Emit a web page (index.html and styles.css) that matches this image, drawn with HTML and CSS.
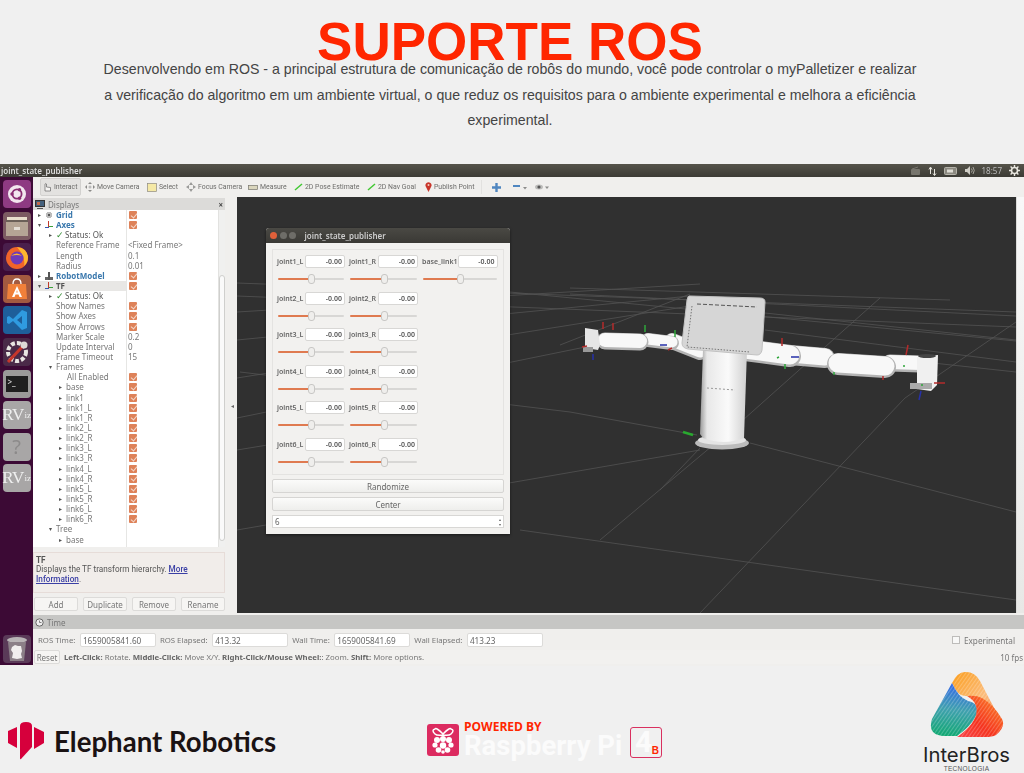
FILE: index.html
```html
<!DOCTYPE html>
<html lang="pt-BR">

<head>
    <meta charset="UTF-8">
    <meta name="viewport" content="width=device-width, initial-scale=1.0">
    <title>Suporte ROS</title>
    <link rel="stylesheet" href="styles.css">
</head>

<body>
    <header class="intro">
        <h1>SUPORTE ROS</h1>
        <p>Desenvolvendo em ROS - a principal estrutura de comunicação de robôs do mundo, você pode controlar o myPalletizer e realizar<br>
        a verificação do algoritmo em um ambiente virtual, o que reduz os requisitos para o ambiente experimental e melhora a eficiência<br>
        experimental.</p>
    </header>

    <section class="desktop">
        <div class="topbar">
            <span class="topbar-title">joint_state_publisher</span>
            <div class="tray">
                <svg width="11" height="10" viewBox="0 0 11 10"><rect x="1" y="3" width="9" height="6" rx="1" fill="#77756d"/><path d="M2 3 8 1" stroke="#77756d"/></svg>
                <svg width="9" height="10" viewBox="0 0 9 10"><path d="M2.500 8V2M1 3.500 2.500 1 4 3.500M6.500 3v6M5 7.500 6.500 9.500 8 7.500" stroke="#e8e6df" fill="none"/></svg>
                <svg width="14" height="8" viewBox="0 0 14 8"><rect x=".5" y=".5" width="12" height="7" rx="1" fill="#8b8980" stroke="#b5b3aa"/><rect x="3" y="2.500" width="6" height="3" fill="#dedcd4"/></svg>
                <svg width="10" height="9" viewBox="0 0 10 9"><path d="M0 3h2l3-3v9L2 6H0z" fill="#cfcdc5"/><path d="M6.500 2.500q1.500 2 0 4M8 1q2.500 3.500 0 7" stroke="#a9a79f" fill="none"/></svg>
                <span class="clock">18:57</span>
                <svg width="11" height="11" viewBox="0 0 11 11"><circle cx="5.500" cy="5.500" r="3" fill="none" stroke="#e8e6df" stroke-width="1.600"/><path d="M5.500 0v2M5.500 9v2M0 5.500h2M9 5.500h2M1.600 1.600 3 3M8 8l1.400 1.400M9.400 1.600 8 3M3 8 1.600 9.400" stroke="#e8e6df" stroke-width="1.400"/></svg>
            </div>
        </div>

        <div class="workspace">
            <nav class="launcher">
                <div class="tile tile-dash">
                    <svg width="20" height="20" viewBox="0 0 20 20"><circle cx="10" cy="10" r="9" fill="#f3e6ef"/><circle cx="10" cy="10" r="4.600" fill="none" stroke="#8a2d72" stroke-width="1.800"/><circle cx="5" cy="10" r="1.700" fill="#8a2d72"/><circle cx="12.500" cy="5.700" r="1.700" fill="#8a2d72"/><circle cx="12.500" cy="14.300" r="1.700" fill="#8a2d72"/></svg>
                </div>
                <div class="tile tile-files">
                    <svg width="24" height="24" viewBox="0 0 24 24"><rect x="2" y="3" width="20" height="5" fill="#e9dfcd"/><rect x="1" y="8" width="22" height="14" fill="#b5a595"/><rect x="1" y="6" width="22" height="2" fill="#6b6058"/><rect x="9" y="13" width="6" height="3" fill="#e4ded5"/></svg>
                </div>
                <div class="tile tile-firefox">
                    <svg width="26" height="26" viewBox="0 0 26 26"><circle cx="13" cy="14" r="11" fill="#f0642a"/><path d="M13 3q10 1 11 10 0 6-4 9 2-9-7-19z" fill="#fdb52f"/><circle cx="13" cy="14" r="6.500" fill="#6e3bb8"/><path d="M7 12q6-5 11 0-5-2-11 0z" fill="#fdb52f"/></svg>
                </div>
                <div class="tile tile-store">
                    <svg width="24" height="24" viewBox="0 0 24 24"><path d="M3 7h18l1 15H2z" fill="#f0803a"/><path d="M8 7q0-5 4-5t4 5" fill="none" stroke="#fff" stroke-width="1.300"/><path d="M12 9 7 20h2.500l1-2.500h3l1 2.500H17zM11.300 15.500 12 13l.7 2.500z" fill="#fff"/></svg>
                </div>
                <div class="tile tile-code">
                    <svg width="24" height="24" viewBox="0 0 24 24"><path d="M17 2 8 11 4 8 2 9v6l2 1 4-3 9 9 5-2V4zm0 6v8l-5-4z" fill="#2f9be0"/></svg>
                </div>
                <div class="tile tile-settings">
                    <svg width="26" height="26" viewBox="0 0 26 26"><circle cx="13" cy="13" r="9" fill="none" stroke="#e8e6e2" stroke-width="4" stroke-dasharray="4 2"/><path d="M4 23 19 7" stroke="#c6362c" stroke-width="3"/><circle cx="20" cy="6" r="3.500" fill="#dcdad6"/></svg>
                </div>
                <div class="tile tile-term"><span class="term-screen">&gt;_</span></div>
                <div class="tile tile-gray">RV<small>iz</small></div>
                <div class="tile tile-gray tile-help">?</div>
                <div class="tile tile-gray">RV<small>iz</small></div>
                <div class="tile tile-trash">
                    <svg width="24" height="28" viewBox="0 0 24 28"><ellipse cx="12" cy="5" rx="10" ry="3" fill="#b9b4b6"/><path d="M3 7h18l-2 19H5z" fill="#8b7f87"/><path d="M7 12l3-2 3 1 3 0 1 5-1 3 1 4-5 1-5-1 1-5-2-3z" fill="#f1eeee"/></svg>
                </div>
            </nav>

            <div class="rviz">
                <div class="toolbar">
                    <span class="tool tool-on">
                        <svg width="10" height="10" viewBox="0 0 10 10"><path d="M3 9V2q1-1 1.500 0v3l4 .5V9z" fill="#f6f5f3" stroke="#666" stroke-width=".7"/></svg>Interact
                    </span>
                    <span class="tool tool-move">
                        <svg width="10" height="10" viewBox="0 0 10 10"><path d="M5 0 7 2H3zM5 10 3 8h4zM0 5l2-2v4zM10 5 8 3v4z" fill="#8a8a88"/><circle cx="5" cy="5" r="1.500" fill="#bbb"/></svg>Move Camera
                    </span>
                    <span class="tool tool-select">
                        <svg width="10" height="9" viewBox="0 0 10 9"><rect x=".5" y=".5" width="9" height="8" fill="#f5e9a6" stroke="#8d8b80" stroke-width=".7"/></svg>Select
                    </span>
                    <span class="tool tool-focus">
                        <svg width="10" height="10" viewBox="0 0 10 10"><path d="M5 0 7 3H3zM5 10 3 7h4zM0 5l3-2v4zM10 5 7 3v4z" fill="#9a9a98"/></svg>Focus Camera
                    </span>
                    <span class="tool tool-measure">
                        <svg width="10" height="5" viewBox="0 0 10 5"><rect x=".5" y=".5" width="9" height="4" fill="#dad6bd" stroke="#77766c" stroke-width=".7"/></svg>Measure
                    </span>
                    <span class="tool tool-pose">
                        <svg width="9" height="8" viewBox="0 0 9 8"><path d="M1 7 8 1" stroke="#41c832" stroke-width="1.500"/></svg>2D Pose Estimate
                    </span>
                    <span class="tool tool-goal">
                        <svg width="9" height="8" viewBox="0 0 9 8"><path d="M1 7 8 1" stroke="#41c832" stroke-width="1.500"/></svg>2D Nav Goal
                    </span>
                    <span class="tool tool-point">
                        <svg width="7" height="10" viewBox="0 0 7 10"><path d="M3.500 10 1 5a3 3 0 1 1 5 0z" fill="#c8352b"/><circle cx="3.500" cy="3" r="1" fill="#f3d0c0"/></svg>Publish Point
                    </span>
                    <span class="tool-sep"></span>
                    <svg class="tool-plus" width="9" height="9" viewBox="0 0 9 9"><path d="M4.500 0v9M0 4.500h9" stroke="#4f86c0" stroke-width="2.400"/></svg>
                    <svg class="tool-minus" width="14" height="6" viewBox="0 0 14 6"><path d="M0 2h7" stroke="#4f86c0" stroke-width="2"/><path d="M10 3h4l-2 2.500z" fill="#8d8d8b"/></svg>
                    <svg class="tool-eye" width="14" height="8" viewBox="0 0 14 8"><ellipse cx="4" cy="4" rx="4" ry="2.500" fill="#bcbcba"/><circle cx="4" cy="4" r="1.600" fill="#555"/><path d="M10 3.500h4l-2 2.500z" fill="#8d8d8b"/></svg>
                </div>

                <div class="rviz-main">
                    <aside class="side">
                        <div class="side-title">
                            <svg width="10" height="9" viewBox="0 0 10 9"><rect x=".5" y=".5" width="9" height="6" fill="#44617d" stroke="#333"/><path d="M2 8.500h6" stroke="#555"/><rect x="2" y="2" width="3" height="3" fill="#c56b4c"/></svg>
                            <span>Displays</span>
                            <b class="side-close">×</b>
                        </div>
                        <div class="tree-wrap">
                            <div class="tree">
                                <div class="row"><span class="name top"><i class="arr">▸</i><i class="ico ico-grid"></i><b class="blue">Grid</b></span><span class="val"><i class="chk"></i></span></div>
                                <div class="row"><span class="name top"><i class="arr">▾</i><i class="ico ico-axes"></i><b class="blue">Axes</b></span><span class="val"><i class="chk"></i></span></div>
                                <div class="row"><span class="name status"><i class="arr">▸</i><i class="tick">✓</i>Status: Ok</span><span class="val"></span></div>
                                <div class="row"><span class="name prop">Reference Frame</span><span class="val">&lt;Fixed Frame&gt;</span></div>
                                <div class="row"><span class="name prop">Length</span><span class="val">0.1</span></div>
                                <div class="row"><span class="name prop">Radius</span><span class="val">0.01</span></div>
                                <div class="row"><span class="name top"><i class="arr">▸</i><i class="ico ico-robot"></i><b class="blue">RobotModel</b></span><span class="val"><i class="chk"></i></span></div>
                                <div class="row row-sel"><span class="name top"><i class="arr">▾</i><i class="ico ico-axes"></i><b>TF</b></span><span class="val"><i class="chk"></i></span></div>
                                <div class="row"><span class="name status"><i class="arr">▸</i><i class="tick">✓</i>Status: Ok</span><span class="val"></span></div>
                                <div class="row"><span class="name prop">Show Names</span><span class="val"><i class="chk"></i></span></div>
                                <div class="row"><span class="name prop">Show Axes</span><span class="val"><i class="chk"></i></span></div>
                                <div class="row"><span class="name prop">Show Arrows</span><span class="val"><i class="chk"></i></span></div>
                                <div class="row"><span class="name prop">Marker Scale</span><span class="val">0.2</span></div>
                                <div class="row"><span class="name prop">Update Interval</span><span class="val">0</span></div>
                                <div class="row"><span class="name prop">Frame Timeout</span><span class="val">15</span></div>
                                <div class="row"><span class="name group"><i class="arr">▾</i>Frames</span><span class="val"></span></div>
                                <div class="row"><span class="name leaf">All Enabled</span><span class="val"><i class="chk"></i></span></div>
                                <div class="row"><span class="name link"><i class="arr">▸</i>base</span><span class="val"><i class="chk"></i></span></div>
                                <div class="row"><span class="name link"><i class="arr">▸</i>link1</span><span class="val"><i class="chk"></i></span></div>
                                <div class="row"><span class="name link"><i class="arr">▸</i>link1_L</span><span class="val"><i class="chk"></i></span></div>
                                <div class="row"><span class="name link"><i class="arr">▸</i>link1_R</span><span class="val"><i class="chk"></i></span></div>
                                <div class="row"><span class="name link"><i class="arr">▸</i>link2_L</span><span class="val"><i class="chk"></i></span></div>
                                <div class="row"><span class="name link"><i class="arr">▸</i>link2_R</span><span class="val"><i class="chk"></i></span></div>
                                <div class="row"><span class="name link"><i class="arr">▸</i>link3_L</span><span class="val"><i class="chk"></i></span></div>
                                <div class="row"><span class="name link"><i class="arr">▸</i>link3_R</span><span class="val"><i class="chk"></i></span></div>
                                <div class="row"><span class="name link"><i class="arr">▸</i>link4_L</span><span class="val"><i class="chk"></i></span></div>
                                <div class="row"><span class="name link"><i class="arr">▸</i>link4_R</span><span class="val"><i class="chk"></i></span></div>
                                <div class="row"><span class="name link"><i class="arr">▸</i>link5_L</span><span class="val"><i class="chk"></i></span></div>
                                <div class="row"><span class="name link"><i class="arr">▸</i>link5_R</span><span class="val"><i class="chk"></i></span></div>
                                <div class="row"><span class="name link"><i class="arr">▸</i>link6_L</span><span class="val"><i class="chk"></i></span></div>
                                <div class="row"><span class="name link"><i class="arr">▸</i>link6_R</span><span class="val"><i class="chk"></i></span></div>
                                <div class="row"><span class="name group"><i class="arr">▾</i>Tree</span><span class="val"></span></div>
                                <div class="row"><span class="name link"><i class="arr">▸</i>base</span><span class="val"></span></div>
                            </div>
                            <div class="tree-scroll"><span class="tree-thumb"></span></div>
                        </div>
                        <div class="desc">
                            <b>TF</b><br>
                            Displays the TF transform hierarchy. <a href="#">More<br>Information</a>.
                        </div>
                        <div class="side-btns">
                            <span class="btn">Add</span>
                            <span class="btn">Duplicate</span>
                            <span class="btn">Remove</span>
                            <span class="btn">Rename</span>
                        </div>
                    </aside>

                    <div class="splitter">◂</div>

                    <main class="view">
                        <svg class="scene" viewBox="237 197 779 416">
                            <defs>
                                <linearGradient id="col" x1="0" x2="1" y1="0" y2="0">
                                    <stop offset="0" stop-color="#999"/>
                                    <stop offset=".15" stop-color="#e8e8e8"/>
                                    <stop offset=".6" stop-color="#fafafa"/>
                                    <stop offset="1" stop-color="#cfcfcf"/>
                                </linearGradient>
                            </defs>
                            <g class="grid-lines">
                                <path d="M237 283 1016 312M237 296 1016 327M510 292 1016 341"/>
                                <path d="M570 288 950 300M570 294 1016 316M700 306 1016 340M765 330 1016 362M850 354 1016 372"/>
                                <path d="M237 312 700 284M237 340 690 296M237 378 690 306M237 418 600 344"/>
                                <path d="M880 298 743 420 600 540M1016 322 905 398 700 613M690 294 560 345"/>
                                <path d="M570 412 697 435M240 372 570 412M750 443 1016 512M700 448 660 490M520 530 1016 600"/>
                                <path d="M237 450 420 420M237 530 700 450"/>
                            </g>
                            <g class="arm" fill="none" stroke-linecap="round">
                                <path class="a1 w16" d="M672 341 700 352"/><path class="a2 w16" d="M672 341 700 352"/>
                                <path class="a1 w14" d="M648 340 672 343"/><path class="a2 w14" d="M648 340 672 343"/>
                                <path class="a1 w17" d="M605 341 640 342"/><path class="a2 w17" d="M605 341 640 342"/>
                                <path class="a1 w20" d="M790 355 825 358"/><path class="a2 w20" d="M790 355 825 358"/>
                                <path class="a1 w22" d="M745 350 790 356"/><path class="a2 w22" d="M745 350 790 356"/>
                                <path class="a1 w17" d="M890 363 920 364"/><path class="a2 w17" d="M890 363 920 364"/>
                                <path class="a1 w22" d="M838 364 885 367"/><path class="a2 w22" d="M838 364 885 367"/>
                            </g>
                            <path d="M585 328 598 330 600 345 598 350 585 348z" fill="#e6e6e6"/>
                            <rect x="583" y="347" width="10" height="5" fill="#999"/>
                            <path d="M917 357 938 355 937 385 931 391 917 389z" fill="#f0f0f0"/>
                            <ellipse cx="927" cy="356" rx="9" ry="2" fill="#444"/>
                            <rect x="910" y="383" width="22" height="6" fill="#aaa"/>
                            <ellipse cx="722" cy="443" rx="27" ry="6.500" fill="#bbb"/>
                            <ellipse cx="722" cy="440" rx="24" ry="5" fill="#e4e4e4"/>
                            <path d="M703 350h44l-3 88q-20 8-41 0l-3-4z" fill="url(#col)"/>
                            <path d="M690 296Q688 295 687 300L682 343Q682 348 688 349L757 355Q761 355 762 350L765 302Q765 298 760 298z" fill="#d6d6d6" stroke="#c2c2c2"/>
                            <path d="M697 304 757 307" fill="none" stroke="#555" stroke-dasharray="4 2"/>
                            <path d="M692 306 687 347 750 352" fill="none" stroke="#777" stroke-dasharray="1.500 1.500"/>
                            <path d="M707 388 735 390" stroke="#999" stroke-dasharray="2 2"/>
                            <g class="axes" fill="none" stroke-width="1.500">
                                <path stroke="#b32b2b" d="M603 322V329M613 323V330M782 338V346M883 376V380M908 345 906 355M934 383H945M668 350 672 348M582 347 587 346"/>
                                <path stroke="#2ea53a" d="M645 325V332M675 330V337M777 358 779 357M785 364V369M834 372V375M904 365V367M922 384V386"/>
                                <path stroke="#29a92f" stroke-width="2.500" d="M683 432 693 435"/>
                                <path stroke="#2630a8" d="M593 354V360M660 345 667 345M791 357H799M921 391 919 400"/>
                            </g>
                        </svg>

                        <div class="jsp">
                            <div class="jsp-title">
                                <i class="dot dot-close"></i><i class="dot"></i><i class="dot"></i>
                                <span>joint_state_publisher</span>
                            </div>
                            <div class="jsp-body">
                                <div class="jsp-frame">
                                    <div class="joint"><div class="joint-top"><label>joint1_L</label><span class="num">-0.00</span></div><div class="slider"><i class="knob"></i></div></div>
                                    <div class="joint"><div class="joint-top"><label>joint1_R</label><span class="num">-0.00</span></div><div class="slider"><i class="knob"></i></div></div>
                                    <div class="joint"><div class="joint-top"><label>base_link1</label><span class="num">-0.00</span></div><div class="slider"><i class="knob"></i></div></div>
                                    <div class="joint"><div class="joint-top"><label>joint2_L</label><span class="num">-0.00</span></div><div class="slider"><i class="knob"></i></div></div>
                                    <div class="joint"><div class="joint-top"><label>joint2_R</label><span class="num">-0.00</span></div><div class="slider"><i class="knob"></i></div></div>
                                    <div></div>
                                    <div class="joint"><div class="joint-top"><label>joint3_L</label><span class="num">-0.00</span></div><div class="slider"><i class="knob"></i></div></div>
                                    <div class="joint"><div class="joint-top"><label>joint3_R</label><span class="num">-0.00</span></div><div class="slider"><i class="knob"></i></div></div>
                                    <div></div>
                                    <div class="joint"><div class="joint-top"><label>joint4_L</label><span class="num">-0.00</span></div><div class="slider"><i class="knob"></i></div></div>
                                    <div class="joint"><div class="joint-top"><label>joint4_R</label><span class="num">-0.00</span></div><div class="slider"><i class="knob"></i></div></div>
                                    <div></div>
                                    <div class="joint"><div class="joint-top"><label>joint5_L</label><span class="num">-0.00</span></div><div class="slider"><i class="knob"></i></div></div>
                                    <div class="joint"><div class="joint-top"><label>joint5_R</label><span class="num">-0.00</span></div><div class="slider"><i class="knob"></i></div></div>
                                    <div></div>
                                    <div class="joint"><div class="joint-top"><label>joint6_L</label><span class="num">-0.00</span></div><div class="slider"><i class="knob"></i></div></div>
                                    <div class="joint"><div class="joint-top"><label>joint6_R</label><span class="num">-0.00</span></div><div class="slider"><i class="knob"></i></div></div>
                                    <div></div>
                                </div>
                                <div class="jsp-btn">Randomize</div>
                                <div class="jsp-btn">Center</div>
                                <div class="jsp-spin"><span>6</span><span class="spin-arrows">▴<br>▾</span></div>
                            </div>
                        </div>
                    </main>

                    <div class="view-scroll"></div>
                </div>

                <div class="time-title">
                    <svg width="9" height="9" viewBox="0 0 9 9"><circle cx="4.500" cy="4.500" r="3.700" fill="#eee" stroke="#666"/><path d="M4.500 2.500v2h2" fill="none" stroke="#666" stroke-width=".8"/></svg>
                    <span>Time</span>
                </div>
                <div class="time-row">
                    <label>ROS Time:</label><span class="time-field">1659005841.60</span>
                    <label>ROS Elapsed:</label><span class="time-field">413.32</span>
                    <label>Wall Time:</label><span class="time-field">1659005841.69</span>
                    <label>Wall Elapsed:</label><span class="time-field">413.23</span>
                    <span class="experimental"><i class="box"></i>Experimental</span>
                </div>
                <div class="status-row">
                    <span class="btn btn-reset">Reset</span>
                    <span class="hint"><b>Left-Click:</b> Rotate. <b>Middle-Click:</b> Move X/Y. <b>Right-Click/Mouse Wheel:</b>: Zoom. <b>Shift:</b> More options.</span>
                    <span class="fps">10 fps</span>
                </div>
            </div>
        </div>
    </section>

    <footer class="logos">
        <div class="logo-elephant">
            <svg width="37" height="38" viewBox="0 0 37 38">
                <path d="M0 9 9 5V26L0 21z" fill="#d6003c"/>
                <path d="M12 4Q12 0 18 0 24 0 24 4V25L13 37Q12 38 12 36z" fill="#d6003c"/>
                <path d="M26 5 36 10V21L26 27z" fill="#d6003c"/>
            </svg>
            <span>Elephant Robotics</span>
        </div>

        <div class="logo-pi">
            <div class="pi-badge">
                <svg width="24" height="27" viewBox="0 0 24 27">
                    <path d="M12 7Q5 0 4 2 0 3 4 7 6 9 12 8 18 9 20 7 24 3 20 2 19 0 12 7z" fill="none" stroke="#fff" stroke-width="1.500"/>
                    <circle cx="12" cy="12" r="3" fill="#fff"/><circle cx="6" cy="13" r="3" fill="#fff"/><circle cx="18" cy="13" r="3" fill="#fff"/>
                    <circle cx="4" cy="18" r="2.600" fill="#fff"/><circle cx="20" cy="18" r="2.600" fill="#fff"/><circle cx="12" cy="18.500" r="3.200" fill="#fff"/>
                    <circle cx="7.500" cy="23" r="2.800" fill="#fff"/><circle cx="16.500" cy="23" r="2.800" fill="#fff"/><circle cx="12" cy="25" r="1.800" fill="#fff"/>
                </svg>
            </div>
            <div class="pi-text">
                <span class="pi-powered">POWERED BY</span>
                <span class="pi-name">Raspberry Pi</span>
            </div>
            <div class="pi-model"><span class="pi-four">4</span><span class="pi-b">B</span></div>
        </div>

        <div class="logo-inter">
            <svg width="74" height="68" viewBox="0 0 74 68">
                <defs>
                    <linearGradient id="blade-top" x1="0" x2="1" y1="0" y2="1">
                        <stop offset="0" stop-color="#fb9d1b"/>
                        <stop offset=".55" stop-color="#fbbd7d"/>
                        <stop offset="1" stop-color="#f86b2f"/>
                    </linearGradient>
                    <linearGradient id="blade-left" x1=".5" x2=".4" y1="0" y2="1">
                        <stop offset="0" stop-color="#3668e8"/>
                        <stop offset=".5" stop-color="#3fa0ae"/>
                        <stop offset="1" stop-color="#12a873"/>
                    </linearGradient>
                    <linearGradient id="blade-right" x1="1" x2="0" y1="0" y2="1">
                        <stop offset="0" stop-color="#fb8a28"/>
                        <stop offset=".6" stop-color="#f5331f"/>
                        <stop offset="1" stop-color="#f8454b"/>
                    </linearGradient>
                    <pattern id="ribs" width="3" height="3" patternUnits="userSpaceOnUse" patternTransform="rotate(35)">
                        <rect width="1" height="3" fill="#fff" opacity=".22"/>
                    </pattern>
                </defs>
                <path d="M22 12Q28 0 36 1 45 1 50 10L72 52Q66 38 50 27 42 25 36 25 28 26 22 12z" fill="url(#blade-top)"/>
                <path d="M22 12Q28 26 38 30 46 31 47 38 48 50 27 65H14Q-3 64 2 48z" fill="url(#blade-left)"/>
                <path d="M37 25Q46 24 52 27 64 34 72 48 76 56 66 64 62 66 55 66H27Q50 50 46 35 44 29 37 25z" fill="url(#blade-right)"/>
                <path d="M2 48 22 12Q28 0 36 1 45 1 50 10L72 48Q76 56 66 64 62 66 55 66H14Q-3 64 2 48z" fill="url(#ribs)"/>
            </svg>
            <span class="inter-name">InterBros</span>
            <span class="inter-sub">TECNOLOGIA</span>
        </div>
    </footer>
</body>

</html>
```

FILE: styles.css
```css
* {
    margin: 0;
    padding: 0;
    box-sizing: border-box;
}

html,
body {
    height: 773px;
    overflow: hidden;
}

body {
    font-family: 'Liberation Sans', Arial, sans-serif;
    background-color: #f0f0f0;
}

/* heading */
.intro {
    height: 164px;
    padding-top: 27px;
    text-align: center;
}

.intro h1 {
    font-size: 53px;
    line-height: 30px;
    font-weight: 700;
    color: #ff2600;
    padding-right: 4px;
}

.intro p {
    font-size: 14.17px;
    line-height: 25.5px;
    color: #444;
    padding-right: 4px;
}

/* ubuntu screenshot */
.desktop {
    height: 502px;
    font-family: 'Noto Sans', sans-serif;
    font-size: 8px;
    color: #777;
    filter: blur(0.3px);
    background-color: #f0efed;
}

.topbar {
    height: 13px;
    display: flex;
    align-items: center;
    justify-content: space-between;
    background: linear-gradient(#55534a, #3c3b35);
    color: #ddd;
    padding-right: 4px;
}

.topbar-title {
    font-size: 8px;
    font-weight: 600;
    padding-left: 1px;
}

.tray {
    display: flex;
    align-items: center;
    gap: 7px;
}

.clock {
    font-size: 8px;
    color: #bbb;
}

.workspace {
    display: flex;
    height: 489px;
}

.launcher {
    width: 33px;
    height: 488px;
    background-color: #3c0a35;
    display: flex;
    flex-direction: column;
    align-items: center;
    padding-top: 3px;
    gap: 3.6px;
}

.tile {
    width: 28px;
    height: 28px;
    border-radius: 4px;
    display: flex;
    align-items: center;
    justify-content: center;
    flex-shrink: 0;
}

.tile-dash {
    background-color: #8e3a82;
}

.tile-files {
    background-color: #7c5a62;
}

.tile-firefox {
    background-color: #4a1f4c;
}

.tile-store {
    background-color: #a35a40;
}

.tile-code {
    background-color: #1e5f9a;
}

.tile-settings {
    background-color: #4a2a48;
}

.tile-term {
    background-color: #9b9a99;
}

.term-screen {
    width: 22px;
    height: 16px;
    background-color: #1f1f1f;
    color: #eee;
    font-size: 8px;
    line-height: 12px;
    padding-left: 2px;
}

.tile-gray {
    background-color: #a8a6a6;
    color: #efefef;
    font-family: 'Liberation Serif', serif;
    font-size: 17px;
}

.tile-gray small {
    font-size: 9px;
}

.tile-help {
    font-family: 'Noto Sans', sans-serif;
    color: #8c8a8a;
    font-size: 20px;
}

.tile-trash {
    margin-top: auto;
    margin-bottom: 2px;
    background-color: #5a3a58;
}

.rviz {
    flex: 1;
    min-width: 0;
    display: flex;
    flex-direction: column;
}

/* toolbar */
.toolbar {
    height: 20px;
    display: flex;
    align-items: center;
    font-family: Roboto, sans-serif;
    font-size: 6.9px;
    padding-left: 7px;
    color: #6d6d6b;
}

.tool {
    display: flex;
    align-items: center;
    gap: 2px;
    white-space: nowrap;
}

.tool-on {
    width: 41px;
    height: 18px;
    background-color: #e3e2e0;
    border: 1px solid #d2d1cf;
    border-radius: 2px;
    padding-left: 1px;
}

.tool-move {
    margin-left: 4px;
    width: 62px;
}

.tool-select {
    width: 39px;
}

.tool-focus {
    width: 62px;
}

.tool-measure {
    width: 46px;
}

.tool-pose {
    width: 73px;
}

.tool-goal {
    width: 58px;
}

.tool-point {
    width: 56px;
}

.tool-sep {
    width: 1px;
    height: 14px;
    background-color: #e2e1df;
    margin: 0 10px 0 0;
}

.tool-minus {
    margin-left: 12px;
}

.tool-eye {
    margin-left: 8px;
}

/* displays panel */
.rviz-main {
    display: flex;
    height: 416px;
}

.side {
    width: 195px;
    flex-shrink: 0;
    display: flex;
    flex-direction: column;
}

.side-title {
    height: 12px;
    width: 192px;
    background-color: #dcdbd9;
    display: flex;
    align-items: center;
    gap: 3px;
    padding-left: 2px;
    margin-top: 1px;
}

.side-close {
    margin-left: auto;
    padding-right: 2px;
    font-size: 8px;
    color: #444;
}

.tree-wrap {
    display: flex;
    width: 192px;
    height: 337px;
    background-color: #fff;
}

.tree {
    flex: 1;
    background: linear-gradient(to right, transparent 93px, #e6e6e4 93px, #e6e6e4 94px, transparent 94px);
}

.row {
    display: flex;
    height: 10.15px;
    line-height: 10.15px;
    white-space: nowrap;
}

.row-sel .name {
    background-color: #e8e7e5;
}

.name {
    width: 93px;
    display: flex;
    align-items: center;
}

.val {
    padding-left: 2px;
    display: flex;
    align-items: center;
}

.row i {
    font-style: normal;
}

.arr {
    display: inline-block;
    width: 7px;
    font-family: 'DejaVu Sans', sans-serif;
    font-size: 6px;
    color: #555;
    flex-shrink: 0;
}

.top {
    padding-left: 5px;
}

.top b {
    font-weight: 700;
    color: #555;
}

.top b.blue {
    color: #3a78ad;
}

.ico {
    display: inline-block;
    width: 8px;
    height: 8px;
    margin-right: 3px;
    flex-shrink: 0;
}

.ico-grid {
    background: radial-gradient(circle, #555 20%, #bbb 25%, #bbb 55%, transparent 60%);
}

.ico-axes {
    background:
        linear-gradient(#c23a2a, #c23a2a) 3px 0 / 1px 6px no-repeat,
        linear-gradient(#3aa03a, #3aa03a) 3px 5px / 5px 1px no-repeat,
        linear-gradient(#3555b0, #3555b0) 0 6px / 4px 1px no-repeat;
}

.ico-robot {
    background:
        linear-gradient(#555, #555) 3px 0 / 2px 8px no-repeat,
        linear-gradient(#666, #666) 0 5px / 8px 3px no-repeat;
}

.status {
    padding-left: 16px;
    color: #555;
}

.tick {
    display: inline-block;
    width: 9px;
    font-family: 'DejaVu Sans', sans-serif;
    font-size: 9px;
    color: #2f8a2f;
}

.prop {
    padding-left: 23px;
}

.group {
    padding-left: 16px;
}

.leaf {
    padding-left: 34px;
}

.link {
    padding-left: 26px;
}

.chk {
    display: block;
    position: relative;
    width: 8px;
    height: 8px;
    margin-left: 1px;
    border-radius: 1px;
    background-color: #de8259;
}

.chk::after {
    content: "";
    position: absolute;
    left: 2.5px;
    top: 0.5px;
    width: 3px;
    height: 5px;
    border: solid #f3d9cc;
    border-width: 0 1px 1px 0;
    transform: rotate(40deg);
}

.tree-scroll {
    width: 7px;
    background-color: #f0f0ef;
    border-left: 1px solid #e2e2e0;
    padding-top: 65px;
}

.tree-thumb {
    display: block;
    height: 266px;
    border: 1px solid #cfcfcd;
    border-radius: 3px;
    background-color: #fafafa;
}

.desc {
    width: 192px;
    height: 41px;
    margin-top: 5px;
    background-color: #f1edea;
    border: 1px solid #e6dcd8;
    padding: 3px 2px 0;
    font-family: Roboto, sans-serif;
    font-size: 8.2px;
    line-height: 9.4px;
    color: #555;
}

.desc a {
    color: #3a3fa5;
    font-weight: 500;
}

.side-btns {
    display: flex;
    gap: 5px;
    margin-top: 4px;
    padding-left: 1px;
    width: 192px;
}

.btn {
    flex: 1;
    height: 14px;
    line-height: 13px;
    text-align: center;
    background-color: #f6f5f3;
    border: 1px solid #dcdbd9;
    border-radius: 2px;
}

.splitter {
    width: 9px;
    flex-shrink: 0;
    display: flex;
    align-items: center;
    justify-content: center;
    font-family: 'DejaVu Sans', sans-serif;
    font-size: 6px;
    color: #666;
}

/* 3d view */
.view {
    position: relative;
    width: 779px;
    flex-shrink: 0;
    background-color: #303030;
    overflow: hidden;
}

.scene {
    display: block;
    width: 779px;
    height: 416px;
}

.grid-lines path {
    fill: none;
    stroke: #535353;
    stroke-width: 0.8;
}

.a1 {
    stroke: #b4b4b4;
}

.a2 {
    stroke: #f8f8f8;
    transform: translateY(-1px);
}

.a1.w14 {
    stroke-width: 14;
}

.a2.w14 {
    stroke-width: 11;
}

.a1.w16 {
    stroke-width: 16;
}

.a2.w16 {
    stroke-width: 13;
}

.a1.w17 {
    stroke-width: 17;
}

.a2.w17 {
    stroke-width: 14;
}

.a1.w20 {
    stroke-width: 20;
}

.a2.w20 {
    stroke-width: 17;
}

.a1.w22 {
    stroke-width: 22;
}

.a2.w22 {
    stroke-width: 19;
}

.view-scroll {
    flex: 1;
    background: linear-gradient(#f8f8f8, #e8e8e6);
    border-left: 1px solid #dcdcda;
}

/* floating window */
.jsp {
    position: absolute;
    left: 29px;
    top: 31px;
    width: 244px;
    height: 306px;
    background-color: #f2f1ef;
    color: #666;
    box-shadow: 0 1px 3px rgba(0, 0, 0, 0.5);
    border-radius: 3px 3px 0 0;
}

.jsp-title {
    height: 15px;
    display: flex;
    align-items: center;
    gap: 2.5px;
    padding-left: 4px;
    background: linear-gradient(#4a4944, #3a3935);
    border-radius: 3px 3px 0 0;
    color: #ccc;
    font-weight: 600;
    font-size: 8px;
}

.jsp-title span {
    margin-left: 6px;
}

.dot {
    width: 7px;
    height: 7px;
    border-radius: 50%;
    background-color: #6e6d68;
}

.dot-close {
    background-color: #e0603a;
}

.jsp-body {
    padding: 6px 6px 0;
}

.jsp-frame {
    height: 226px;
    border: 1px solid #e4e3e1;
    display: grid;
    grid-template-columns: 72px 73px 1fr;
    grid-auto-rows: 36.5px;
    padding: 5px 4px 0;
    font-size: 7px;
    font-weight: 600;
}

.joint-top {
    display: flex;
    align-items: center;
    justify-content: space-between;
    padding-right: 4px;
}

.num {
    width: 40px;
    height: 13px;
    line-height: 12px;
    text-align: right;
    padding-right: 2px;
    background-color: #fff;
    border: 1px solid #d8d7d5;
    border-radius: 2px;
    color: #555;
}

.slider {
    position: relative;
    height: 2px;
    margin: 10px 5px 0 1px;
    background: linear-gradient(to right, #df7a50 50%, #d8d7d5 50%);
    border-radius: 1px;
}

.knob {
    position: absolute;
    left: 50%;
    top: -4px;
    width: 7px;
    height: 10px;
    margin-left: -3px;
    background-color: #efeeec;
    border: 1px solid #c8c7c5;
    border-radius: 3px;
}

.jsp-btn {
    height: 14px;
    line-height: 13px;
    margin-top: 4px;
    text-align: center;
    background: linear-gradient(#fbfbfa, #eeeeec);
    border: 1px solid #d6d5d3;
    border-radius: 2px;
}

.jsp-spin {
    height: 13px;
    margin-top: 4px;
    display: flex;
    align-items: center;
    justify-content: space-between;
    background-color: #fff;
    border: 1px solid #d8d7d5;
    padding: 0 2px;
    line-height: 5px;
}

.spin-arrows {
    font-family: 'DejaVu Sans', sans-serif;
    font-size: 4px;
}

/* time panel */
.time-title {
    height: 14px;
    margin-top: 2px;
    display: flex;
    align-items: center;
    gap: 3px;
    padding-left: 2px;
    background-color: #c6c6c4;
    color: #777;
}

.time-row {
    height: 22px;
    display: flex;
    align-items: center;
    padding-left: 5px;
    font-size: 7.8px;
}

.time-row label {
    white-space: nowrap;
}

.time-field {
    width: 76px;
    height: 14px;
    line-height: 13px;
    margin: 0 4px 0 4.5px;
    padding-left: 2px;
    background-color: #fff;
    border: 1px solid #dcdbd9;
    border-radius: 2px;
    color: #666;
    font-size: 8.2px;
}

.experimental {
    margin-left: auto;
    margin-right: 9px;
    display: flex;
    align-items: center;
    gap: 4px;
    font-size: 8.2px;
}

.box {
    width: 8px;
    height: 8px;
    background-color: #f8f8f7;
    border: 1px solid #bdbcba;
}

.status-row {
    height: 14px;
    margin-top: -1px;
    display: flex;
    align-items: center;
    padding-left: 1px;
    background-color: #f2f1ef;
    white-space: nowrap;
}

.btn-reset {
    flex: 0 0 26px;
}

.hint {
    margin-left: 4px;
    font-size: 7.8px;
}

.hint b {
    font-weight: 700;
    color: #666;
}

.fps {
    margin-left: auto;
    padding-right: 1px;
}

/* logos */
.logos {
    height: 107px;
    display: flex;
    align-items: flex-start;
    position: relative;
}

.logo-elephant {
    display: flex;
    align-items: center;
    gap: 9px;
    margin: 56px 0 0 8px;
    width: 419px;
}

.logo-elephant span {
    font-family: Lato, sans-serif;
    font-weight: 700;
    font-size: 27.6px;
    color: #1a1213;
}

.logo-pi {
    display: flex;
    margin-top: 54px;
    width: 496px;
}

.pi-badge {
    width: 32px;
    height: 32px;
    margin-top: 4px;
    background-color: #dc2b60;
    border-radius: 3px;
    display: flex;
    align-items: center;
    justify-content: center;
}

.pi-text {
    display: flex;
    flex-direction: column;
    margin-left: 5px;
    width: 166px;
}

.pi-powered {
    font-family: 'Open Sans', sans-serif;
    font-weight: 700;
    font-size: 12px;
    line-height: 13px;
    color: #ff2600;
}

.pi-name {
    font-family: Roboto, sans-serif;
    font-weight: 700;
    font-size: 27.5px;
    line-height: 26px;
    color: #fbfbfb;
    white-space: nowrap;
}

.pi-model {
    position: relative;
    width: 32px;
    height: 31px;
    margin-top: 7px;
    border: 1.5px solid #d9305f;
    border-radius: 3px;
}

.pi-four {
    position: absolute;
    left: 4px;
    top: -3px;
    font-family: Roboto, sans-serif;
    font-weight: 700;
    font-size: 30px;
    line-height: 34px;
    color: #fbfbfb;
}

.pi-b {
    position: absolute;
    right: 2px;
    bottom: 0;
    font-weight: 700;
    font-size: 10px;
    line-height: 12px;
    color: #ff2600;
}

.logo-inter {
    position: absolute;
    right: 14px;
    top: 5px;
    width: 87px;
    display: flex;
    flex-direction: column;
    align-items: center;
}

.inter-name {
    font-family: Inter, sans-serif;
    font-size: 20.3px;
    line-height: 20px;
    margin-top: 6px;
    color: #222;
}

.inter-sub {
    font-size: 6.5px;
    line-height: 8px;
    color: #555;
    letter-spacing: 0.3px;
}
```
